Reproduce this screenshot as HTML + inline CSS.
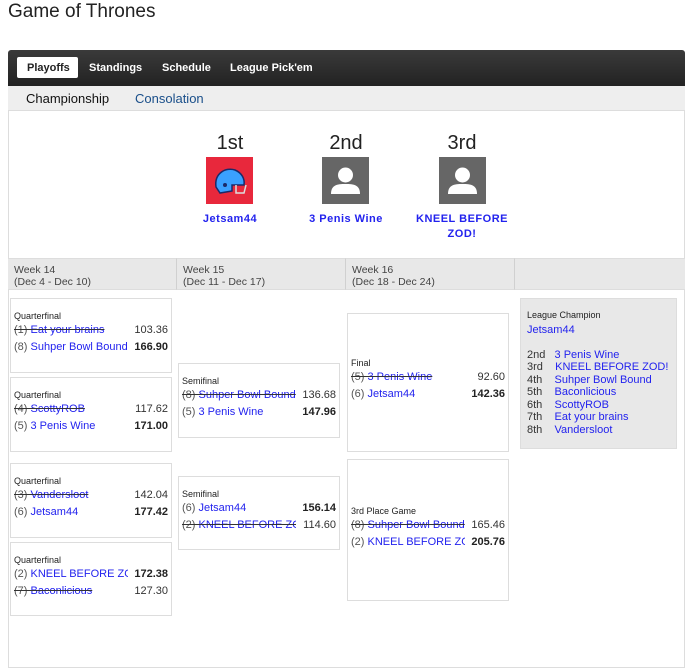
<!DOCTYPE html>
<html><head><style>
*{margin:0;padding:0;box-sizing:border-box}
body{width:689px;height:670px;background:#fff;font-family:"Liberation Sans",Arial,sans-serif;position:relative;overflow:hidden;color:#333}
.a{position:absolute}
h1{position:absolute;left:8px;top:1px;font-size:19px;font-weight:normal;color:#222}
.nav{left:8px;top:50px;width:677px;height:36px;background:linear-gradient(#3a3a3a,#222);border-radius:3px 3px 0 0}
.nav span{position:absolute;top:12px;font-size:11px;font-weight:bold;color:#fff}
.pill{left:17px;top:57px;width:61px;height:21px;background:#fff;border-radius:2px}
.sub{left:8px;top:86px;width:677px;height:25px;background:#eee;border-bottom:1px solid #ddd}
.frame{left:8px;top:111px;width:677px;height:557px;border:1px solid #ddd;border-top:none}
.pod{font-size:20px;color:#222;text-align:center;width:100px}
.ic{width:47px;height:47px;background:#666}
.nm{font-size:11px;font-weight:bold;color:#2222ee;text-align:center;letter-spacing:.5px;line-height:15px}
.wk{top:258px;height:32px;background:#e8e8e8;border-top:1px solid #ddd;border-bottom:1px solid #ddd;font-size:10.5px;color:#444;padding:5px 0 0 6px;line-height:12px;border-right:1px solid #d0d0d0}
.bx{border:1px solid #ddd;background:#fff;display:flex;flex-direction:column;justify-content:center;padding:0 3px 4px 3px;font-size:11px}
.bx .l{font-size:9px;color:#222;margin-bottom:1px}
.r{display:flex;justify-content:space-between;height:17px;line-height:16px;white-space:nowrap}
.r .n{color:#555;overflow:hidden;width:114px}
.r .n b{font-weight:normal;color:#2222ee}
.s{text-decoration:line-through;text-decoration-color:#333}
.w{font-weight:bold;color:#222}
.champ{left:520px;top:298px;width:157px;height:151px;background:#e8e8e8;border:1px solid #ddd;font-size:11px;padding:10px 6px;line-height:12.5px}
.champ .c{color:#2222ee}
</style></head><body>
<h1>Game of Thrones</h1>
<div class="a nav"></div>
<div class="a pill"></div>
<div class="a nav" style="background:none"><span style="left:19px;color:#222">Playoffs</span><span style="left:81px">Standings</span><span style="left:154px">Schedule</span><span style="left:222px">League Pick'em</span></div>
<div class="a sub"><span class="a" style="left:18px;top:5px;font-size:13px;color:#111">Championship</span><span class="a" style="left:127px;top:5px;font-size:13px;color:#1a4f8a">Consolation</span></div>
<div class="a frame"></div>

<div class="a pod" style="left:180px;top:132px">1st</div>
<div class="a pod" style="left:296px;top:132px">2nd</div>
<div class="a pod" style="left:412px;top:132px">3rd</div>
<div class="a ic" style="left:206px;top:157px;background:#e8283c">
<svg width="47" height="47" viewBox="0 0 47 47"><path d="M10 30 C8 16 20 10 29 13 C36 16 39 22 38 28 L26 28 L26 34 L14 36 Z" fill="#3aa0ff" stroke="#1a2a6a" stroke-width="1.5"/><circle cx="19" cy="28" r="2" fill="#1a2a6a"/><path d="M30 28 L30 36 L38 36 L40 28" fill="none" stroke="#ddd" stroke-width="1.5"/></svg></div>
<div class="a ic" style="left:322px;top:157px"><svg width="47" height="47"><circle cx="23.5" cy="18" r="7.5" fill="#fff"/><path d="M9 37 C9 28 15 27 23.5 27 C32 27 38 28 38 37 Z" fill="#fff"/></svg></div>
<div class="a ic" style="left:439px;top:157px"><svg width="47" height="47"><circle cx="23.5" cy="18" r="7.5" fill="#fff"/><path d="M9 37 C9 28 15 27 23.5 27 C32 27 38 28 38 37 Z" fill="#fff"/></svg></div>
<div class="a nm" style="left:180px;top:212px;width:100px">Jetsam44</div>
<div class="a nm" style="left:296px;top:212px;width:100px">3 Penis Wine</div>
<div class="a nm" style="left:408px;top:212px;width:108px">KNEEL BEFORE ZOD!</div>

<div class="a wk" style="left:8px;width:169px">Week 14<br>(Dec 4 - Dec 10)</div>
<div class="a wk" style="left:177px;width:169px">Week 15<br>(Dec 11 - Dec 17)</div>
<div class="a wk" style="left:346px;width:169px">Week 16<br>(Dec 18 - Dec 24)</div>
<div class="a wk" style="left:515px;width:170px;border-right:none"></div>

<div class="a bx" style="left:10px;top:298px;width:162px;height:75px"><div class="l">Quarterfinal</div><div class="r"><span class="n s">(1) <b>Eat your brains</b></span><span>103.36</span></div><div class="r"><span class="n">(8) <b>Suhper Bowl Bound</b></span><span class="w">166.90</span></div></div>
<div class="a bx" style="left:10px;top:377px;width:162px;height:75px"><div class="l">Quarterfinal</div><div class="r"><span class="n s">(4) <b>ScottyROB</b></span><span>117.62</span></div><div class="r"><span class="n">(5) <b>3 Penis Wine</b></span><span class="w">171.00</span></div></div>
<div class="a bx" style="left:10px;top:463px;width:162px;height:75px"><div class="l">Quarterfinal</div><div class="r"><span class="n s">(3) <b>Vandersloot</b></span><span>142.04</span></div><div class="r"><span class="n">(6) <b>Jetsam44</b></span><span class="w">177.42</span></div></div>
<div class="a bx" style="left:10px;top:542px;width:162px;height:74px"><div class="l">Quarterfinal</div><div class="r"><span class="n">(2) <b>KNEEL BEFORE ZOD!</b></span><span class="w">172.38</span></div><div class="r"><span class="n s">(7) <b>Baconlicious</b></span><span>127.30</span></div></div>

<div class="a bx" style="left:178px;top:363px;width:162px;height:75px"><div class="l">Semifinal</div><div class="r"><span class="n s">(8) <b>Suhper Bowl Bound</b></span><span>136.68</span></div><div class="r"><span class="n">(5) <b>3 Penis Wine</b></span><span class="w">147.96</span></div></div>
<div class="a bx" style="left:178px;top:476px;width:162px;height:74px"><div class="l">Semifinal</div><div class="r"><span class="n">(6) <b>Jetsam44</b></span><span class="w">156.14</span></div><div class="r"><span class="n s">(2) <b>KNEEL BEFORE ZOD!</b></span><span>114.60</span></div></div>

<div class="a bx" style="left:347px;top:313px;width:162px;height:139px"><div class="l">Final</div><div class="r"><span class="n s">(5) <b>3 Penis Wine</b></span><span>92.60</span></div><div class="r"><span class="n">(6) <b>Jetsam44</b></span><span class="w">142.36</span></div></div>
<div class="a bx" style="left:347px;top:459px;width:162px;height:142px"><div class="l">3rd Place Game</div><div class="r"><span class="n s">(8) <b>Suhper Bowl Bound</b></span><span>165.46</span></div><div class="r"><span class="n">(2) <b>KNEEL BEFORE ZOD!</b></span><span class="w">205.76</span></div></div>

<div class="a champ"><div style="font-size:9px;color:#222;margin-bottom:2px">League Champion</div><div class="c">Jetsam44</div><br>
<div>2nd&nbsp;&nbsp;&nbsp;<span class="c">3 Penis Wine</span></div>
<div>3rd&nbsp;&nbsp;&nbsp;&nbsp;<span class="c">KNEEL BEFORE ZOD!</span></div>
<div>4th&nbsp;&nbsp;&nbsp;&nbsp;<span class="c">Suhper Bowl Bound</span></div>
<div>5th&nbsp;&nbsp;&nbsp;&nbsp;<span class="c">Baconlicious</span></div>
<div>6th&nbsp;&nbsp;&nbsp;&nbsp;<span class="c">ScottyROB</span></div>
<div>7th&nbsp;&nbsp;&nbsp;&nbsp;<span class="c">Eat your brains</span></div>
<div>8th&nbsp;&nbsp;&nbsp;&nbsp;<span class="c">Vandersloot</span></div>
</div>
</body></html>
